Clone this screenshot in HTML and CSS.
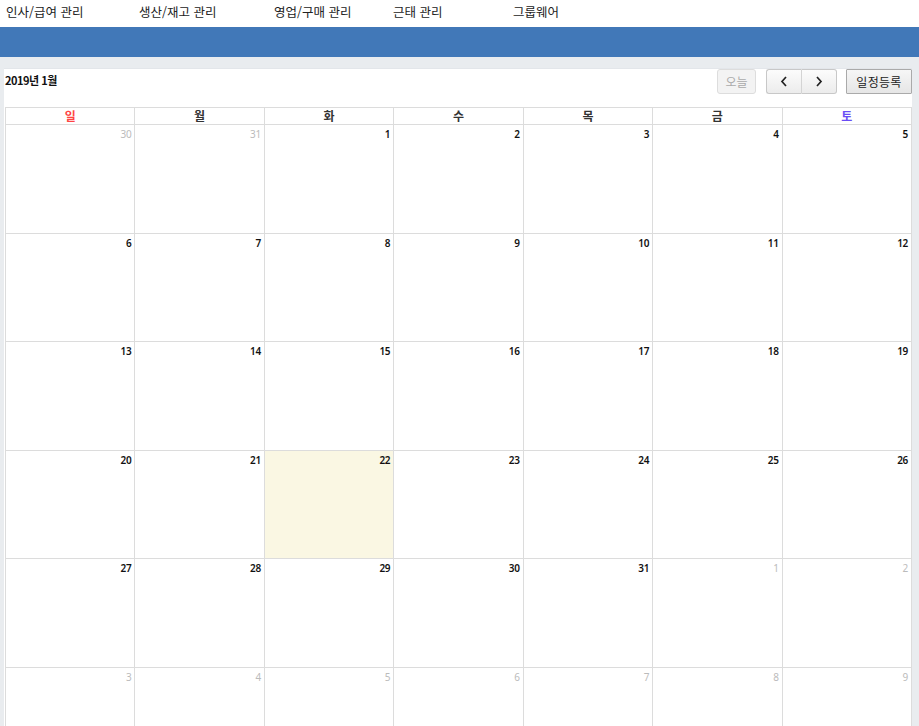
FILE: index.html
```html
<!DOCTYPE html>
<html lang="ko">
<head>
<meta charset="utf-8">
<title>일정</title>
<link rel="stylesheet" href="styles.css">
</head>
<body>
<nav class="topnav">
  <a class="nav-item">인사/급여 관리</a>
  <a class="nav-item">생산/재고 관리</a>
  <a class="nav-item">영업/구매 관리</a>
  <a class="nav-item">근태 관리</a>
  <a class="nav-item">그룹웨어</a>
</nav>
<div class="bluebar"></div>
<main class="main">
  <section class="panel">
    <div class="toolbar">
      <h2 class="title">2019년 1월</h2>
      <div class="actions">
        <button class="btn btn-today" disabled>오늘</button>
        <div class="btn-group">
          <button class="btn btn-nav"><svg width="8" height="11" viewBox="0 0 8 11"><polyline points="6,1 2,5.5 6,10" fill="none" stroke="#222" stroke-width="1.7"/></svg></button>
          <button class="btn btn-nav"><svg width="8" height="11" viewBox="0 0 8 11"><polyline points="2,1 6,5.5 2,10" fill="none" stroke="#222" stroke-width="1.7"/></svg></button>
        </div>
        <button class="btn btn-add">일정등록</button>
      </div>
    </div>
    <div class="calendar">
      <div class="dow sun">일</div>
      <div class="dow">월</div>
      <div class="dow">화</div>
      <div class="dow">수</div>
      <div class="dow">목</div>
      <div class="dow">금</div>
      <div class="dow sat">토</div>

      <div class="day other">30</div>
      <div class="day other">31</div>
      <div class="day">1</div>
      <div class="day">2</div>
      <div class="day">3</div>
      <div class="day">4</div>
      <div class="day">5</div>

      <div class="day">6</div>
      <div class="day">7</div>
      <div class="day">8</div>
      <div class="day">9</div>
      <div class="day">10</div>
      <div class="day">11</div>
      <div class="day">12</div>

      <div class="day">13</div>
      <div class="day">14</div>
      <div class="day">15</div>
      <div class="day">16</div>
      <div class="day">17</div>
      <div class="day">18</div>
      <div class="day">19</div>

      <div class="day">20</div>
      <div class="day">21</div>
      <div class="day today">22</div>
      <div class="day">23</div>
      <div class="day">24</div>
      <div class="day">25</div>
      <div class="day">26</div>

      <div class="day">27</div>
      <div class="day">28</div>
      <div class="day">29</div>
      <div class="day">30</div>
      <div class="day">31</div>
      <div class="day other">1</div>
      <div class="day other">2</div>

      <div class="day other">3</div>
      <div class="day other">4</div>
      <div class="day other">5</div>
      <div class="day other">6</div>
      <div class="day other">7</div>
      <div class="day other">8</div>
      <div class="day other">9</div>
    </div>
  </section>
</main>
</body>
</html>
```
FILE: styles.css
```css
* { box-sizing: border-box; }
html, body { margin: 0; padding: 0; }
body {
  font-family: "Noto Sans CJK KR", "Noto Sans", sans-serif;
  color: #222;
  background: #fff;
  overflow: hidden;
  height: 726px;
}
.topnav {
  height: 27px;
  display: flex;
  align-items: center;
  padding-left: 6px;
  font-size: 12.5px;
  line-height: 1;
  padding-bottom: 3px;
}
.nav-item { color: #222; text-decoration: none; white-space: nowrap; }
.nav-item:nth-child(1) { width: 133px; }
.nav-item:nth-child(2) { width: 135px; }
.nav-item:nth-child(3) { width: 119px; }
.nav-item:nth-child(4) { width: 120px; }
.bluebar { height: 30px; background: #4178b8; }
.main {
  background: #e9ecef;
  padding: 11px 7px 0 4px;
  height: 669px;
  overflow: hidden;
}
.panel {
  background: #fff;
  height: 100%;
  padding-left: 1px;
  border-top: 1px solid #e3e6ea;
  overflow: hidden;
}
.toolbar {
  height: 38px;
  display: flex;
  justify-content: space-between;
  align-items: flex-start;
}
.title {
  margin: 3px 0 0 0;
  font-size: 11px;
  font-weight: 700;
  letter-spacing: -0.5px;
  color: #111;
}
.actions { display: flex; align-items: center; }
.btn {
  font-family: inherit;
  font-size: 12px;
  height: 25px;
  padding: 0;
  border: 1px solid #c8c8c8;
  border-radius: 3px;
  background: linear-gradient(#fcfcfc, #ececec);
  color: #333;
  display: flex;
  align-items: center;
  justify-content: center;
}
.btn-today {
  width: 39px;
  margin-right: 10px;
  color: #aaa;
  border-color: #ddd;
  background: #f3f3f3;
}
.btn-group { display: flex; margin-right: 9px; }
.btn-nav { width: 36px; }
.btn-nav:first-child { border-radius: 3px 0 0 3px; border-right-color: #d4d4d4; }
.btn-nav:last-child { width: 35px; border-radius: 0 3px 3px 0; border-left: none; }
.btn-add {
  width: 66px;
  border-color: #aaa;
  border-radius: 1px;
  background: linear-gradient(#f6f6f6, #e6e6e6);
  color: #222;
  letter-spacing: 0.3px;
}
.calendar {
  display: grid;
  grid-template-columns: repeat(7, 1fr);
  grid-template-rows: 16px repeat(6, 107.5px);
  gap: 1px;
  background: #dcdcdc;
  border: 1px solid #dcdcdc;
}
.dow {
  background: #fff;
  text-align: center;
  font-size: 12px;
  font-weight: 700;
  line-height: 16px;
  color: #333;
}
.dow.sun { color: #f44; }
.dow.sat { color: #6a4cf5; }
.day {
  background: #fff;
  text-align: right;
  padding: 3px 3px 0 0;
  font-family: "Noto Sans", sans-serif;
  font-size: 10px;
  font-weight: 600;
  line-height: 12px;
  color: #111;
  letter-spacing: -0.3px;
}
.day.other { color: #bbb; font-weight: 400; }
.day.today { background: #faf7e3; }
```
